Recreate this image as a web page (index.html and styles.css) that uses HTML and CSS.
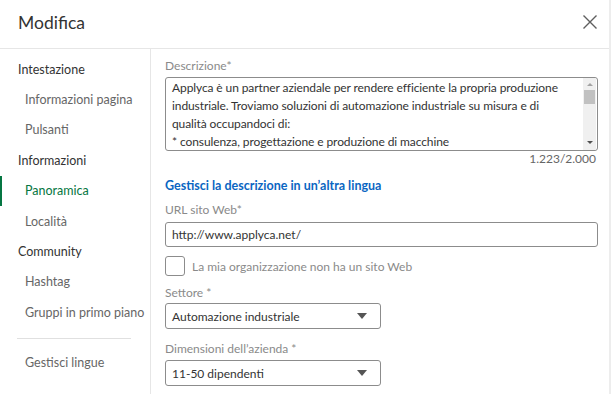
FILE: index.html
```html
<!DOCTYPE html>
<html lang="it">
<head>
<meta charset="utf-8">
<title>Modifica</title>
<link rel="stylesheet" href="styles.css">
</head>
<body>
<div class="modal">
  <header class="header">
    <h1 class="title">Modifica</h1>
    <button class="close" aria-label="Chiudi">
      <svg width="16" height="16" viewBox="0 0 16 16"><path d="M1.5 1.5 L14.5 14.5 M14.5 1.5 L1.5 14.5" stroke="#5e5e5e" stroke-width="1.4" fill="none"/></svg>
    </button>
  </header>
  <div class="body">
    <nav class="sidebar">
      <div class="nav-head">Intestazione</div>
      <div class="nav-item">Informazioni pagina</div>
      <div class="nav-item">Pulsanti</div>
      <div class="nav-head">Informazioni</div>
      <div class="nav-item active">Panoramica</div>
      <div class="nav-item">Località</div>
      <div class="nav-head">Community</div>
      <div class="nav-item">Hashtag</div>
      <div class="nav-item">Gruppi in primo piano</div>
      <div class="nav-divider"></div>
      <div class="nav-item">Gestisci lingue</div>
    </nav>
    <main class="main">
      <div class="label">Descrizione*</div>
      <div class="textarea">
        <div class="ta-text">Applyca è un partner aziendale per rendere efficiente la propria produzione<br>industriale. Troviamo soluzioni di automazione industriale su misura e di<br>qualità occupandoci di:<br>* consulenza, progettazione e produzione di macchine</div>
        <div class="scrollbar">
          <span class="arrow up"></span>
          <span class="thumb"></span>
          <span class="spacer"></span>
          <span class="arrow down"></span>
        </div>
      </div>
      <div class="counter">1.223/2.000</div>
      <a class="link">Gestisci la descrizione in un’altra lingua</a>
      <div class="label label-url">URL sito Web*</div>
      <div class="input">http://www.applyca.net/</div>
      <label class="check-row"><span class="checkbox"></span><span class="check-label">La mia organizzazione non ha un sito Web</span></label>
      <div class="label label-sel">Settore *</div>
      <div class="select"><span>Automazione industriale</span><span class="caret"></span></div>
      <div class="label label-sel2">Dimensioni dell’azienda *</div>
      <div class="select"><span>11-50 dipendenti</span><span class="caret"></span></div>
    </main>
  </div>
</div>
</body>
</html>
```
FILE: styles.css
```css
* { box-sizing: border-box; }
html, body { margin: 0; padding: 0; background: #fff; }
body {
  font-family: "Segoe UI", Lato, "Open Sans", sans-serif;
  color: #333;
  width: 611px;
  height: 394px;
  overflow: hidden;
}
.modal {
  width: 611px;
  height: 394px;
  display: flex;
  flex-direction: column;
  border-right: 2px solid #ededed;
}
.header {
  height: 49px;
  flex: none;
  display: flex;
  align-items: center;
  justify-content: space-between;
  padding: 0 11px 4px 18px;
  border-bottom: 1px solid #e6e6e6;
}
.title {
  margin: 0;
  font-size: 17.5px;
  font-weight: 400;
  color: #333;
}
.close {
  background: none;
  border: 0;
  padding: 0;
  width: 16px;
  height: 16px;
  display: flex;
}
.body {
  flex: 1;
  display: flex;
  min-height: 0;
}
.sidebar {
  width: 151px;
  flex: none;
  border-right: 1px solid #e6e6e6;
  padding-top: 5px;
}
.nav-head, .nav-item {
  height: 30.4px;
  display: flex;
  align-items: center;
  font-size: 12.5px;
  white-space: nowrap;
}
.nav-head { padding-left: 18px; color: #333; }
.nav-item { padding-left: 25px; color: #666; }
.nav-item.active {
  color: #057642;
  box-shadow: inset 2px 0 0 #057642;
}
.nav-divider {
  height: 1px;
  background: #e0e0e0;
  margin: 10px 19px 9px 17px;
}
.main {
  flex: 1;
  padding: 9px 12px 0 14px;
  display: flex;
  flex-direction: column;
  align-items: flex-start;
}
.label {
  font-size: 12px;
  line-height: 16px;
  color: #8a8a8a;
}
.textarea {
  margin-top: 3px;
  width: 433px;
  height: 74px;
  border: 1px solid #8c8c8c;
  border-radius: 3px;
  display: flex;
  overflow: hidden;
}
.ta-text {
  flex: 1;
  padding: 1px 0 0 6px;
  font-size: 12px;
  letter-spacing: -0.1px;
  line-height: 18px;
  color: #333;
  white-space: nowrap;
  overflow: hidden;
}
.scrollbar {
  width: 13px;
  margin: 0 1px 0 0;
  background: #f0f0f0;
  display: flex;
  flex-direction: column;
  align-items: center;
}
.arrow {
  width: 0;
  height: 0;
  border-left: 3px solid transparent;
  border-right: 3px solid transparent;
  margin: 5px 0 4px;
}
.arrow.up { border-bottom: 3px solid #a3a3a3; }
.arrow.down { border-top: 3px solid #505050; margin: 4px 0 6px; }
.thumb { width: 11px; height: 14px; background: #c1c1c1; }
.spacer { flex: 1; }
.counter {
  align-self: stretch;
  text-align: right;
  font-size: 12px;
  line-height: 16px;
  color: #666;
  padding-right: 2px;
}
.link {
  margin-top: 10px;
  font-size: 12.5px;
  line-height: 18px;
  font-weight: 700;
  color: #0a66c2;
}
.label-url { margin-top: 7px; }
.input {
  margin-top: 4px;
  width: 433px;
  height: 25px;
  border: 1px solid #8c8c8c;
  border-radius: 3px;
  padding: 0 6px;
  font-size: 12px;
  line-height: 23px;
  color: #333;
}
.check-row {
  margin-top: 9px;
  display: flex;
  align-items: center;
  gap: 7px;
}
.checkbox {
  width: 20px;
  height: 20px;
  border: 1px solid #8c8c8c;
  border-radius: 3px;
}
.check-label { font-size: 12px; color: #8a8a8a; }
.label-sel { margin-top: 9px; }
.label-sel2 { margin-top: 12px; }
.select {
  margin-top: 2px;
  width: 216px;
  height: 26px;
  border: 1px solid #8c8c8c;
  border-radius: 3px;
  padding: 0 13px 0 6px;
  display: flex;
  align-items: center;
  justify-content: space-between;
  font-size: 12px;
  color: #333;
}
.label-sel2 + .select { margin-top: 3px; }
.caret {
  width: 0;
  height: 0;
  border-left: 5px solid transparent;
  border-right: 5px solid transparent;
  border-top: 6px solid #555;
}
```
